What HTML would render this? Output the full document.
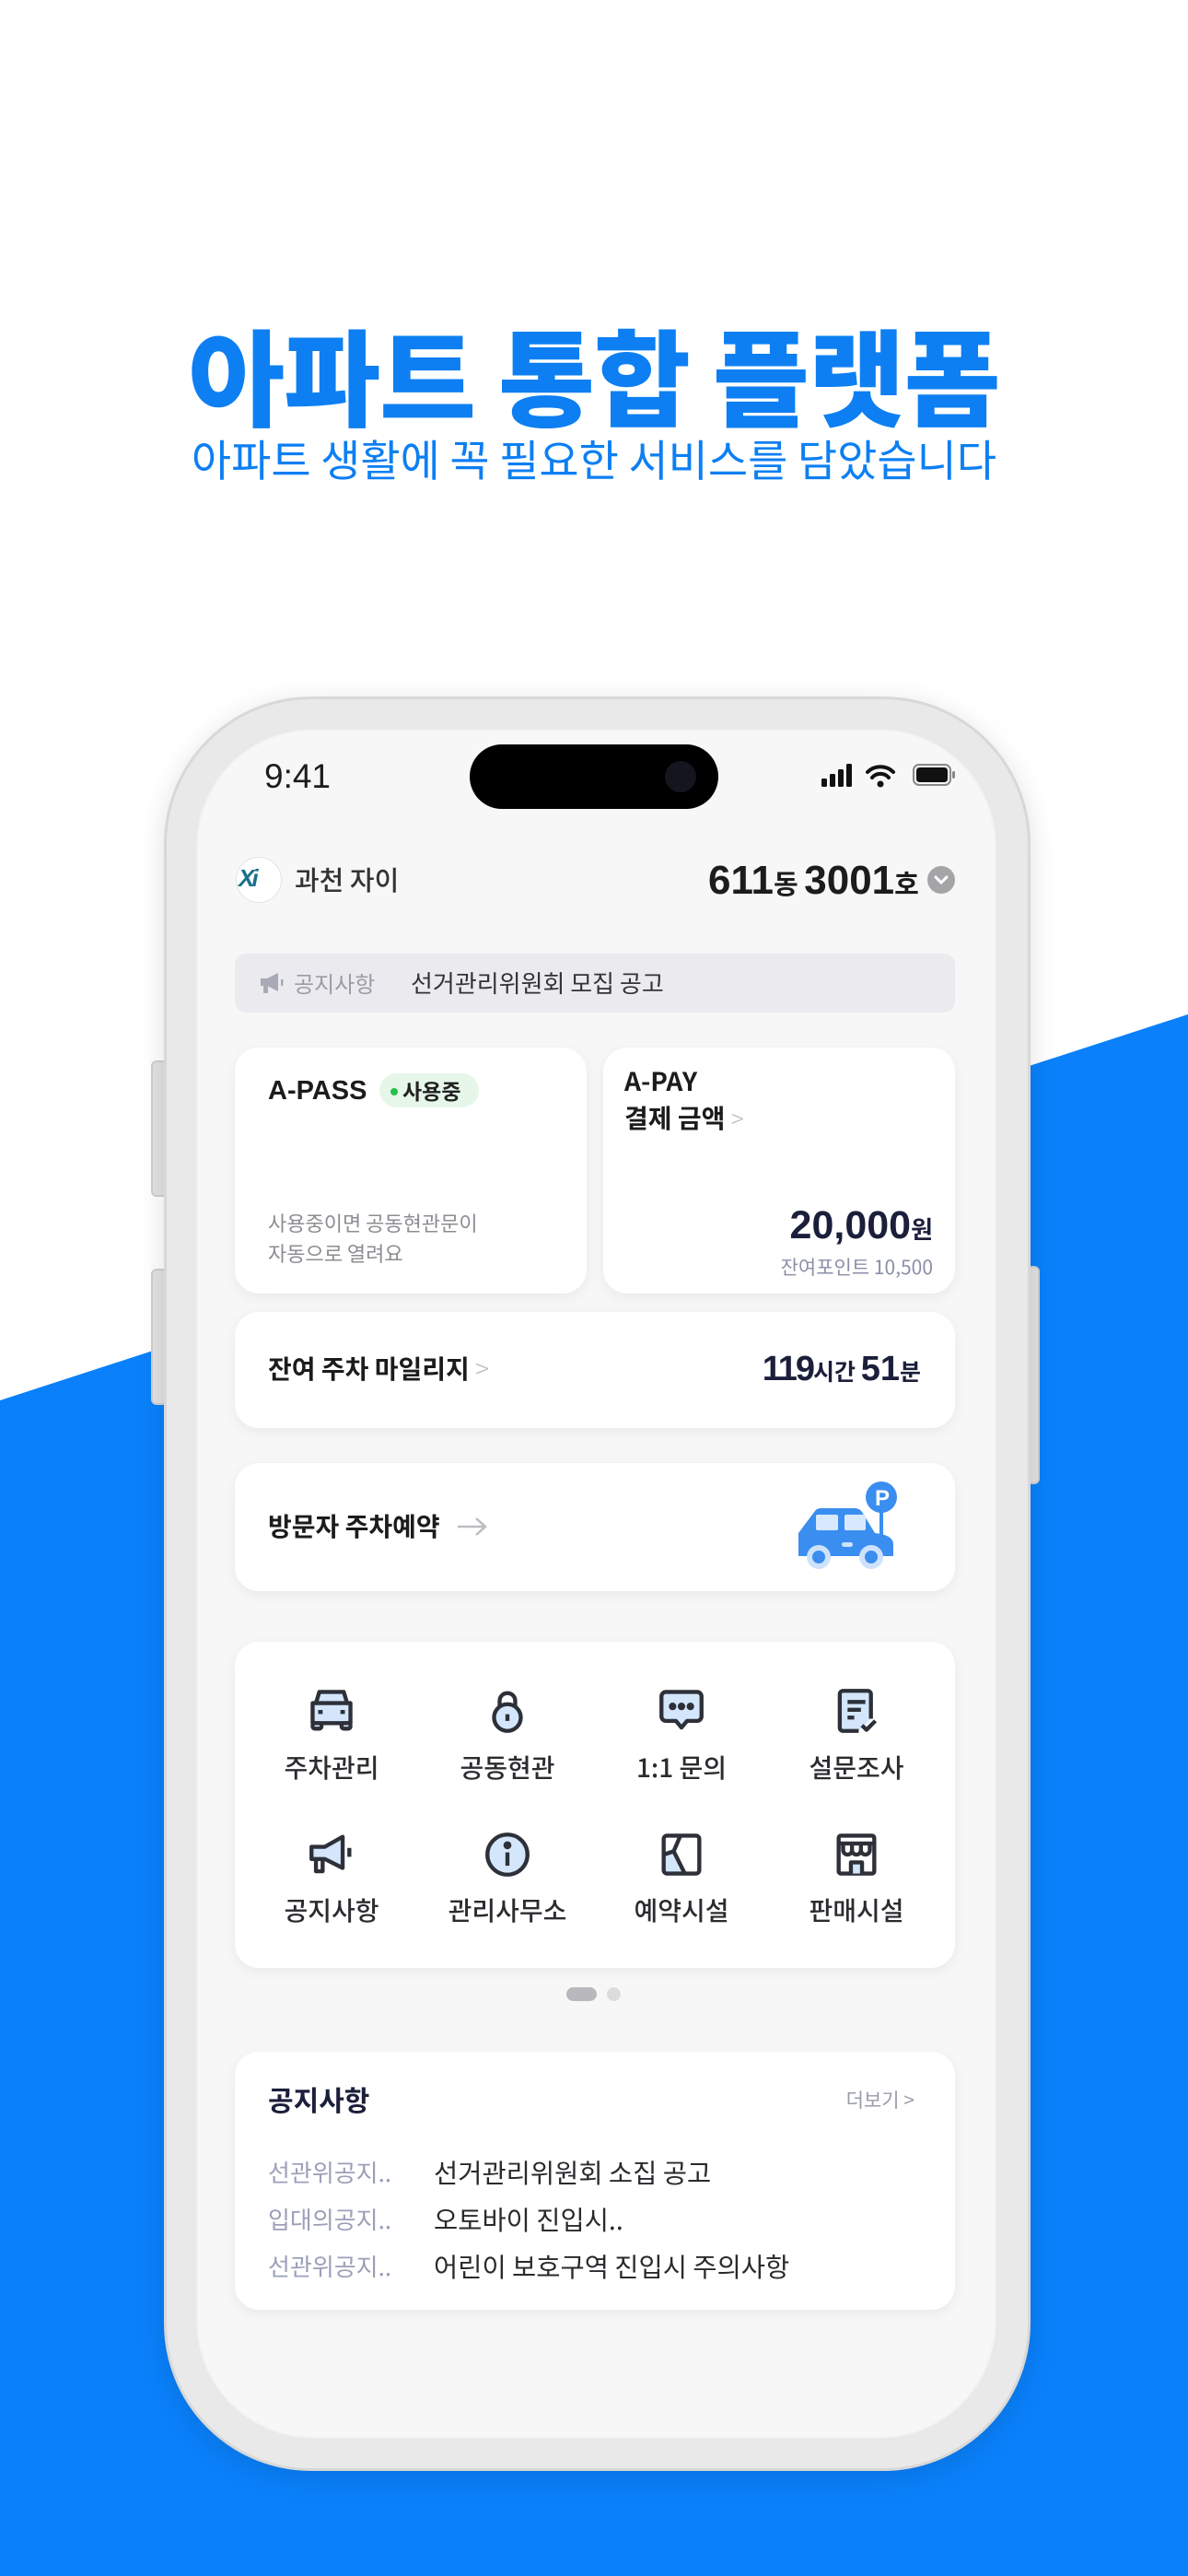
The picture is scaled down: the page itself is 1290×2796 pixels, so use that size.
<!DOCTYPE html>
<html><head><meta charset="utf-8">
<style>
*{margin:0;padding:0;box-sizing:border-box}
body{width:1290px;height:2796px;position:relative;overflow:hidden;background:#fff;font-family:"Liberation Sans","Noto Sans CJK KR",sans-serif;color:#1c1c1e}
.a{position:absolute;white-space:nowrap}
.k{font-family:"Noto Sans CJK KR","Liberation Sans",sans-serif}
.card{position:absolute;background:#fff;border-radius:26px;box-shadow:0 4px 14px rgba(0,0,0,0.06)}
.lbl{position:absolute;width:190px;text-align:center;font-size:28px;font-weight:500;color:#2b2b30}
.ic{position:absolute;width:58px;height:58px}
</style></head><body>
<svg class="a" style="left:0;top:0" width="1290" height="2796"><polygon points="0,1520 1290,1101 1290,2796 0,2796" fill="#0a80fa"/></svg>

<div class="a k" style="left:0;width:1290px;text-align:center;top:330px;font-size:114px;font-weight:900;color:#0d7ff2;line-height:150px;letter-spacing:-1px">아파트 통합 플랫폼</div>
<div class="a k" style="left:0;width:1290px;text-align:center;top:465px;font-size:47px;font-weight:400;color:#0d7ff2;line-height:64px">아파트 생활에 꼭 필요한 서비스를 담았습니다</div>

<!-- side buttons -->
<div class="a" style="left:164px;top:1151px;width:18px;height:148px;background:#e2e2e2;border-radius:6px;border:2px solid #cfcfcf"></div>
<div class="a" style="left:164px;top:1377px;width:18px;height:148px;background:#e2e2e2;border-radius:6px;border:2px solid #cfcfcf"></div>
<div class="a" style="left:1115px;top:1374px;width:14px;height:237px;background:#e2e2e2;border-radius:6px;border:2px solid #cfcfcf"></div>
<!-- phone -->
<div class="a" style="left:178px;top:756px;width:941px;height:1926px;background:#e9e9e9;border-radius:160px;border:3px solid #d8d8d8;box-shadow:0 6px 30px rgba(0,0,0,0.12)"></div>
<div class="a" style="left:212px;top:790px;width:871px;height:1858px;background:#f7f7f7;border-radius:128px;box-shadow:inset 0 0 4px rgba(0,0,0,0.15)"></div>

<div class="a" style="left:287px;top:818px;font-size:37px;font-weight:500;line-height:50px">9:41</div>
<div class="a" style="left:510px;top:808px;width:270px;height:70px;background:#000;border-radius:35px"></div>
<div class="a" style="left:722px;top:826px;width:34px;height:34px;border-radius:50%;background:#151520"></div>
<svg class="a" style="left:890px;top:826px" width="150" height="30">
<rect x="2" y="19" width="6" height="9" rx="1.5" fill="#111"/><rect x="11" y="14" width="6" height="14" rx="1.5" fill="#111"/><rect x="20" y="9" width="6" height="19" rx="1.5" fill="#111"/><rect x="29" y="3" width="6" height="25" rx="1.5" fill="#111"/>
<path d="M52 12 a20 20 0 0 1 28 0" stroke="#111" stroke-width="4" fill="none" stroke-linecap="round"/><path d="M57 18 a12 12 0 0 1 18 0" stroke="#111" stroke-width="4" fill="none" stroke-linecap="round"/><circle cx="66" cy="25" r="3.5" fill="#111"/>
<rect x="102" y="4" width="40" height="22" rx="6" fill="none" stroke="#888" stroke-width="2"/><rect x="105" y="7" width="34" height="16" rx="3.5" fill="#111"/><rect x="144" y="11" width="3" height="8" rx="1.5" fill="#888"/>
</svg>

<!-- header -->
<div class="a" style="left:256px;top:930px;width:50px;height:50px;border-radius:50%;background:#fff;border:1px solid #e4e4e4"></div>
<div class="a" style="left:259px;top:938px;font-size:26px;font-weight:700;font-style:italic;color:#1a6f8a;letter-spacing:-3px">Xi</div>
<div class="a k" style="left:320px;top:932px;font-size:29px;font-weight:500;line-height:44px;color:#333">과천 자이</div>
<div class="a" style="left:769px;top:928px;line-height:56px;font-weight:700;color:#1c1c1e"><span style="font-size:44px">611</span><span class="k" style="font-size:29px;font-weight:600">동 </span><span style="font-size:44px">3001</span><span class="k" style="font-size:29px;font-weight:600">호</span></div>
<svg class="a" style="left:1007px;top:940px" width="30" height="30"><circle cx="15" cy="15" r="15" fill="#a5a5a8"/><path d="M9 12 l6 6 l6-6" stroke="#fff" stroke-width="3" fill="none" stroke-linecap="round"/></svg>

<!-- notice bar -->
<div class="a" style="left:255px;top:1035px;width:782px;height:64px;background:#ebebef;border-radius:12px"></div>
<svg class="a" style="left:280px;top:1052px" width="30" height="30"><path d="M3 10 h7 l12-6 v20 l-12-6 h-7z" fill="#a8aab6"/><rect x="6" y="18" width="5" height="8" rx="1" fill="#a8aab6"/><rect x="25" y="11" width="2.5" height="7" fill="#a8aab6"/></svg>
<div class="a k" style="left:319px;top:1049px;font-size:24px;color:#9a9caa;line-height:36px">공지사항</div>
<div class="a k" style="left:446px;top:1048px;font-size:26px;color:#333;line-height:38px">선거관리위원회 모집 공고</div>

<!-- A-PASS -->
<div class="card" style="left:255px;top:1137px;width:382px;height:267px"></div>
<div class="a" style="left:291px;top:1165px;font-size:29px;font-weight:700;line-height:38px">A-PASS</div>
<div class="a k" style="left:412px;top:1165px;width:108px;height:37px;border-radius:19px;background:#e6f7ea;font-size:23px;font-weight:600;line-height:37px;color:#222;padding-left:12px"><span style="display:inline-block;width:8px;height:8px;border-radius:50%;background:#22c04a;vertical-align:middle;margin-right:5px;margin-top:-3px"></span>사용중</div>
<div class="a k" style="left:291px;top:1311px;font-size:22px;color:#8c8c92;line-height:33px">사용중이면 공동현관문이<br>자동으로 열려요</div>

<!-- A-PAY -->
<div class="card" style="left:655px;top:1137px;width:382px;height:267px"></div>
<div class="a k" style="left:678px;top:1153px;font-size:28px;font-weight:700;line-height:40px">A-PAY<br>결제 금액 <span style="color:#b8b8be;font-weight:300;font-size:26px">&gt;</span></div>
<div class="a" style="right:277px;top:1302px;line-height:56px;font-weight:700;color:#1b1f3b"><span style="font-size:43px">20,000</span><span class="k" style="font-size:26px">원</span></div>
<div class="a k" style="right:277px;top:1358px;font-size:21px;color:#8a8fa8;line-height:34px">잔여포인트 10,500</div>

<!-- mileage -->
<div class="card" style="left:255px;top:1424px;width:782px;height:126px"></div>
<div class="a k" style="left:291px;top:1465px;font-size:28px;font-weight:700;line-height:40px">잔여 주차 마일리지 <span style="color:#b8b8be;font-weight:300">&gt;</span></div>
<div class="a" style="right:290px;top:1460px;line-height:52px;font-weight:700;color:#1b1f3b"><span style="font-size:38px;letter-spacing:-2px">119</span><span class="k" style="font-size:25px">시간 </span><span style="font-size:38px">51</span><span class="k" style="font-size:25px">분</span></div>

<!-- visitor -->
<div class="card" style="left:255px;top:1588px;width:782px;height:139px"></div>
<div class="a k" style="left:291px;top:1636px;font-size:28px;font-weight:700;line-height:40px">방문자 주차예약</div>
<svg class="a" style="left:495px;top:1644px" width="36" height="26"><path d="M2 13 h30 M22 4 l10 9 l-10 9" stroke="#bcbcc2" stroke-width="2.5" fill="none"/></svg>
<svg class="a" style="left:840px;top:1590px" width="160" height="130">
<rect x="115" y="40" width="4" height="40" fill="#3a8ef0"/>
<circle cx="117" cy="35" r="17" fill="#3a8ef0"/>
<text x="110" y="44" font-family="Liberation Sans" font-weight="700" font-size="24" fill="#fff">P</text>
<path d="M27 74 L45 50 Q47 47 52 47 L88 47 Q93 47 96 51 L110 74 Q130 76 130 86 L130 99 L27 99 Q27 74 27 74 Z" fill="#3a8ef0"/>
<rect x="46" y="54" width="24" height="17" rx="2" fill="#d9e9fd"/><rect x="77" y="54" width="23" height="17" rx="2" fill="#d9e9fd"/>
<rect x="74" y="84" width="12" height="5" rx="2.5" fill="#cfe2fb"/>
<circle cx="49" cy="100" r="13" fill="#cfe2fb"/><circle cx="49" cy="100" r="7" fill="#3a8ef0"/>
<circle cx="106" cy="100" r="13" fill="#cfe2fb"/><circle cx="106" cy="100" r="7" fill="#3a8ef0"/>
</svg>

<!-- grid -->
<div class="card" style="left:255px;top:1782px;width:782px;height:354px"></div>
<svg class="ic" style="left:331px;top:1828px" viewBox="0 0 24 24" fill="none" stroke="#2d3038" stroke-width="1.8" stroke-linejoin="round">
<path d="M6.5 3.5 h11 l1.5 5 h1.5 v9 h-17 v-9 h1.5z" fill="#d3e6fc"/><path d="M5 8.5 h14"/><rect x="3.5" y="17.5" width="4" height="2.5" rx="1" fill="#d3e6fc"/><rect x="16.5" y="17.5" width="4" height="2.5" rx="1" fill="#d3e6fc"/><path d="M6 12.5 h2 M16 12.5 h2"/></svg>
<svg class="ic" style="left:522px;top:1828px" viewBox="0 0 24 24" fill="none" stroke="#2d3038" stroke-width="1.8">
<path d="M8.5 11 V7.5 a3.5 3.5 0 0 1 7 0 V11"/><circle cx="12" cy="15" r="6" fill="#d3e6fc"/><path d="M12 13.5 v3"/></svg>
<svg class="ic" style="left:711px;top:1828px" viewBox="0 0 24 24" fill="none" stroke="#2d3038" stroke-width="1.8" stroke-linejoin="round">
<path d="M5 3.5 h14 a2 2 0 0 1 2 2 v9 a2 2 0 0 1 -2 2 h-4.5 l-2.5 3 l-2.5 -3 h-4.5 a2 2 0 0 1 -2 -2 v-9 a2 2 0 0 1 2 -2z" fill="#d3e6fc"/><circle cx="8" cy="10" r=".8" fill="#2d3038"/><circle cx="12" cy="10" r=".8" fill="#2d3038"/><circle cx="16" cy="10" r=".8" fill="#2d3038"/></svg>
<svg class="ic" style="left:901px;top:1828px" viewBox="0 0 24 24" fill="none" stroke="#2d3038" stroke-width="1.8" stroke-linejoin="round">
<path d="M13 21 h-7 a1.5 1.5 0 0 1 -1.5 -1.5 v-15 a1.5 1.5 0 0 1 1.5 -1.5 h11 a1.5 1.5 0 0 1 1.5 1.5 v11" fill="#d3e6fc"/><path d="M8 8 h8 M8 11.5 h6 M8 15 h3"/><path d="M14.5 18.5 l2 2 l4 -4"/></svg>
<div class="lbl k" style="left:265px;top:1898px">주차관리</div>
<div class="lbl k" style="left:456px;top:1898px">공동현관</div>
<div class="lbl k" style="left:645px;top:1898px">1:1 문의</div>
<div class="lbl k" style="left:835px;top:1898px">설문조사</div>
<svg class="ic" style="left:331px;top:1984px" viewBox="0 0 24 24" fill="none" stroke="#2d3038" stroke-width="1.8" stroke-linejoin="round">
<path d="M3 8.5 h6 l8 -4.5 v14 l-8 -4 h-6z" fill="#d3e6fc"/><path d="M5 14 v5.5 h3 v-5.5"/><path d="M20 9 v4"/></svg>
<svg class="ic" style="left:522px;top:1984px" viewBox="0 0 24 24" fill="none" stroke="#2d3038" stroke-width="1.8">
<circle cx="12" cy="12" r="9" fill="#d3e6fc"/><path d="M12 11 v6"/><circle cx="12" cy="7.8" r=".9" fill="#2d3038"/></svg>
<svg class="ic" style="left:711px;top:1984px" viewBox="0 0 24 24" fill="none" stroke="#2d3038" stroke-width="1.8" stroke-linejoin="round">
<path d="M4.5 12 l4 -1 l5 9.5 h-9z" fill="#d3e6fc" stroke="none"/><rect x="4" y="3.5" width="16" height="17" rx="1.5"/><path d="M4 12 l4.5 -1.5 l5 10 M8.5 10.5 l3 -7"/></svg>
<svg class="ic" style="left:901px;top:1984px" viewBox="0 0 24 24" fill="none" stroke="#2d3038" stroke-width="1.8" stroke-linejoin="round">
<rect x="4" y="3.5" width="16" height="17" rx="1" fill="#fff"/><path d="M4 7 h16 M6 7 v3 a2 2 0 0 0 4 0 v-3 M10 7 v3 a2 2 0 0 0 4 0 v-3 M14 7 v3 a2 2 0 0 0 4 0 v-3"/><path d="M9.5 20.5 v-5 h5 v5" fill="#d3e6fc"/></svg>
<div class="lbl k" style="left:265px;top:2053px">공지사항</div>
<div class="lbl k" style="left:456px;top:2053px">관리사무소</div>
<div class="lbl k" style="left:645px;top:2053px">예약시설</div>
<div class="lbl k" style="left:835px;top:2053px">판매시설</div>

<div class="a" style="left:615px;top:2157px;width:33px;height:15px;border-radius:8px;background:#b9b9bd"></div>
<div class="a" style="left:659px;top:2157px;width:15px;height:15px;border-radius:50%;background:#dcdcdf"></div>

<!-- notices -->
<div class="card" style="left:255px;top:2227px;width:782px;height:280px"></div>
<div class="a k" style="left:291px;top:2256px;font-size:30px;font-weight:700;color:#1b1f3b;line-height:44px">공지사항</div>
<div class="a k" style="right:297px;top:2262px;font-size:21px;color:#9a9caa;line-height:34px">더보기 &gt;</div>
<div class="a k" style="left:291px;top:2332px;font-size:26px;color:#9aa0b8;line-height:51px">선관위공지..<br>입대의공지..<br>선관위공지..</div>
<div class="a k" style="left:471px;top:2332px;font-size:28.5px;color:#2a2a2e;line-height:51px">선거관리위원회 소집 공고<br>오토바이 진입시..<br>어린이 보호구역 진입시 주의사항</div>
</body></html>
